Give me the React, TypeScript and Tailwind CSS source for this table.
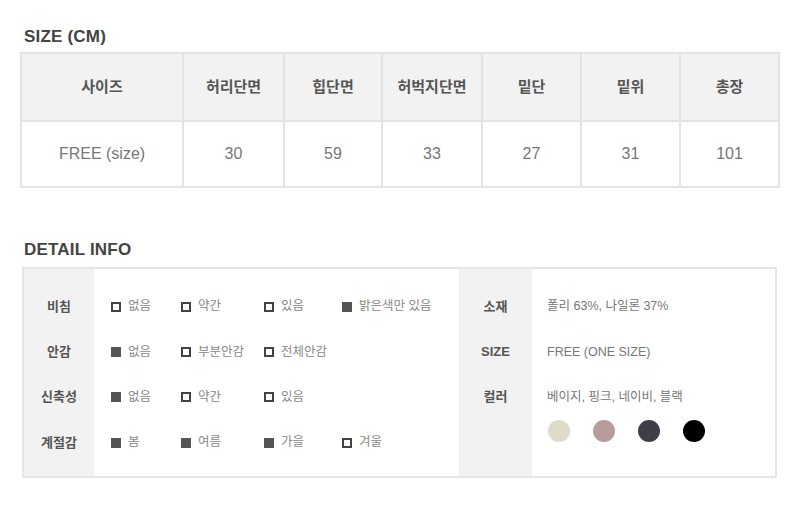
import type { ReactNode } from 'react';

const FONT = { fontFamily: '"Liberation Sans", "Noto Sans CJK KR", sans-serif' };

const headers = ['사이즈', '허리단면', '힙단면', '허벅지단면', '밑단', '밑위', '총장'];
const values = ['FREE (size)', '30', '59', '33', '27', '31', '101'];
const colWidths = ['w-[162px]', 'w-[101px]', 'w-[98px]', 'w-[100px]', 'w-[99px]', 'w-[99px]', 'w-[99px]'];

type Option = { label: string; on: boolean };

const detailRows: { title: string; options: Option[] }[] = [
  {
    title: '비침',
    options: [
      { label: '없음', on: false },
      { label: '약간', on: false },
      { label: '있음', on: false },
      { label: '밝은색만 있음', on: true },
    ],
  },
  {
    title: '안감',
    options: [
      { label: '없음', on: true },
      { label: '부분안감', on: false },
      { label: '전체안감', on: false },
    ],
  },
  {
    title: '신축성',
    options: [
      { label: '없음', on: true },
      { label: '약간', on: false },
      { label: '있음', on: false },
    ],
  },
  {
    title: '계절감',
    options: [
      { label: '봄', on: true },
      { label: '여름', on: true },
      { label: '가을', on: true },
      { label: '겨울', on: false },
    ],
  },
];

// 옵션 칸 너비 (체크박스 위치 맞춤)
const optionWidths = ['w-[70px]', 'w-[83px]', 'w-[78px]', 'w-auto'];

const swatches = ['bg-[#dedbc9]', 'bg-[#b89b9b]', 'bg-[#3f3d48]', 'bg-black'];

function SectionTitle({ children }: { children: ReactNode }) {
  return <h2 className="pl-6 text-[17px] font-bold leading-none text-[#444] tracking-[0.2px]">{children}</h2>;
}

function Check({ on }: { on: boolean }) {
  return (
    <span
      className={`inline-block w-[10px] h-[10px] shrink-0 ${
        on ? 'bg-[#555]' : 'border-2 border-[#444] bg-white'
      }`}
    />
  );
}

export default function App() {
  return (
    <div className="w-[800px] h-[528px] bg-white pt-[28px]" style={FONT}>
      <SectionTitle>SIZE (CM)</SectionTitle>

      <table className="ml-5 mt-[7px] border-collapse border-2 border-[#e4e4e4] table-fixed">
        <colgroup>
          {colWidths.map((w, i) => (
            <col key={i} className={w} />
          ))}
        </colgroup>
        <tbody>
          <tr className="h-[68px] bg-[#f2f2f2]">
            {headers.map((h) => (
              <th key={h} className="border-2 border-[#e4e4e4] text-[15px] font-bold text-[#555] text-center">
                {h}
              </th>
            ))}
          </tr>
          <tr className="h-[66px]">
            {values.map((v, i) => (
              <td key={i} className="border-2 border-[#e4e4e4] text-[16px] text-[#777] text-center">
                {v}
              </td>
            ))}
          </tr>
        </tbody>
      </table>

      <div className="mt-[53px]">
        <SectionTitle>DETAIL INFO</SectionTitle>
      </div>

      <div className="ml-[22px] mt-[9px] w-[755px] h-[211px] border-2 border-[#e6e6e6] grid grid-cols-[70px_365px_73px_1fr]">
        {/* 왼쪽 라벨 */}
        <div className="bg-[#f2f2f2] pt-[15px]">
          {detailRows.map((r) => (
            <div key={r.title} className="h-[45.3px] flex items-center justify-center text-[13px] font-bold text-[#555]">
              {r.title}
            </div>
          ))}
        </div>

        {/* 체크 옵션 */}
        <div className="pt-[15px] pl-[17px]">
          {detailRows.map((r) => (
            <div key={r.title} className="h-[45.3px] flex items-center">
              {r.options.map((o, i) => (
                <div key={o.label} className={`${optionWidths[i]} flex items-center gap-[7px]`}>
                  <Check on={o.on} />
                  <span className="text-[12.5px] text-[#888]">{o.label}</span>
                </div>
              ))}
            </div>
          ))}
        </div>

        {/* 오른쪽 라벨 */}
        <div className="bg-[#f2f2f2] pt-[15px]">
          {['소재', 'SIZE', '컬러'].map((t) => (
            <div key={t} className="h-[45.3px] flex items-center justify-center text-[13px] font-bold text-[#555]">
              {t}
            </div>
          ))}
        </div>

        {/* 값 */}
        <div className="pt-[15px] pl-[15px]">
          <div className="h-[45.3px] flex items-center text-[12.5px] text-[#777]">폴리 63%, 나일론 37%</div>
          <div className="h-[45.3px] flex items-center text-[12.5px] text-[#777]">FREE (ONE SIZE)</div>
          <div className="h-[45.3px] flex items-center text-[12.5px] text-[#777]">베이지, 핑크, 네이비, 블랙</div>
          <div className="flex gap-[23px] pl-[1px] mt-0">
            {swatches.map((c) => (
              <span key={c} className={`w-[22px] h-[22px] rounded-full ${c}`} />
            ))}
          </div>
        </div>
      </div>
    </div>
  );
}
